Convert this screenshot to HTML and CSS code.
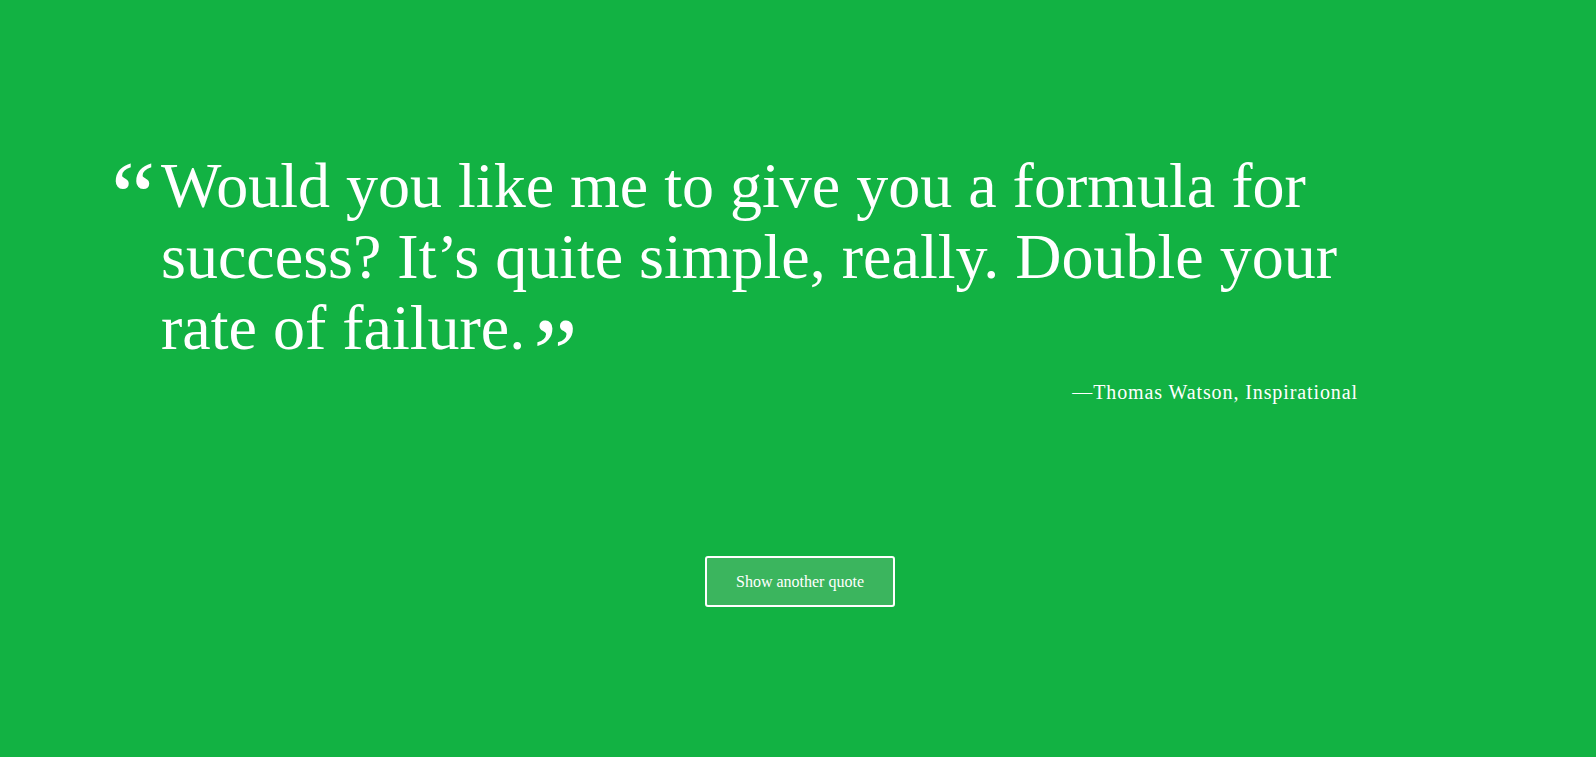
FILE: index.html
```html
<!DOCTYPE html>
<html>
<head>
<meta charset="utf-8">
<link rel="stylesheet" href="styles.css">
</head>
<body>
<main class="page">
  <section class="quote-box">
    <blockquote class="quote">
      <span class="mark open">“</span><p class="text">Would you like me to give you a formula for success? It’s quite simple, really. Double your rate of failure.<span class="mark close">”</span></p>
    </blockquote>
    <p class="author">—Thomas Watson, Inspirational</p>
  </section>
  <div class="actions">
    <button class="btn">Show another quote</button>
  </div>
</main>
</body>
</html>
```
FILE: styles.css
```css
html, body {
  margin: 0;
  padding: 0;
  height: 100%;
}
body {
  background: #12b243;
  color: #fff;
  font-family: "Liberation Serif", "Times New Roman", serif;
}
.page {
  display: flex;
  flex-direction: column;
  height: 757px;
  box-sizing: border-box;
  padding-top: 150px;
}
.quote-box {
  display: flex;
  flex-direction: column;
  padding: 0 238px 0 111px;
}
.quote {
  margin: 0;
  display: flex;
  align-items: flex-start;
}
.mark {
  font-size: 100px;
  line-height: 1;
}
.mark.open {
  display: block;
  width: 50px;
  flex: none;
  margin-top: -3px;
}
.mark.close {
  line-height: 0;
  position: relative;
  top: 37px;
  margin-left: 8px;
}
.text {
  margin: 0;
  font-size: 64px;
  line-height: 71px;
}
.author {
  margin: 18px 0 0;
  text-align: right;
  font-size: 20px;
  line-height: 23px;
  letter-spacing: 0.9px;
}
.actions {
  display: flex;
  justify-content: center;
  margin-top: 152px;
}
.btn {
  width: 190px;
  height: 51px;
  margin-left: 4px;
  background: #3bb55e;
  border: 2px solid #fff;
  border-radius: 3px;
  color: #fff;
  font-family: "Liberation Serif", "Times New Roman", serif;
  font-size: 16px;
}
```
